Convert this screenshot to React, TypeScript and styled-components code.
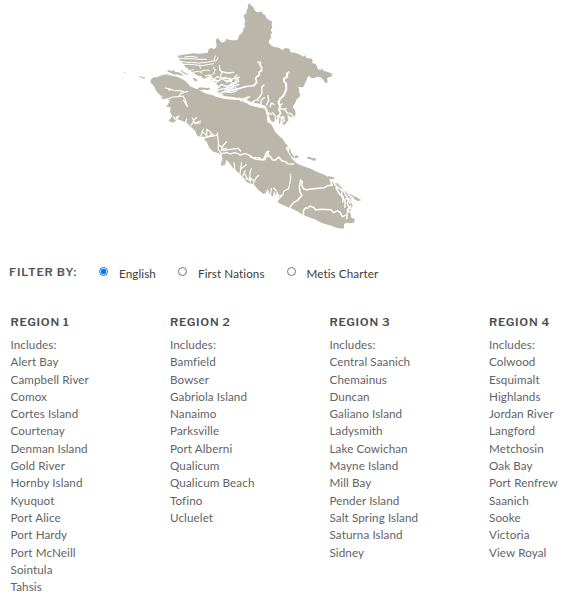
import React, { useState } from 'react'
import styled, { createGlobalStyle } from 'styled-components'

const GlobalStyle = createGlobalStyle`
  * {
    box-sizing: border-box;
  }
  body {
    margin: 0;
    overflow: hidden;
    background: #fff;
    font-family: Lato, 'Liberation Sans', sans-serif;
    font-size: 11.65px;
    letter-spacing: 0.1px;
    color: #626366;
  }
`

const Page = styled.main`
  width: 576px;
  height: 600px;
  overflow: hidden;
`

const MapSvg = styled.svg`
  display: block;
  width: 576px;
  height: 240px;
`

const Land = styled.path`
  fill: #bab7aa;
`

const Water = styled.path<{ $width: number }>`
  fill: none;
  stroke: #fff;
  stroke-width: ${(props) => props.$width};
  stroke-linejoin: round;
  stroke-linecap: round;
`

const Filters = styled.div`
  display: flex;
  height: 74px;
  padding: 24px 0 0 9px;
`

const FilterTitle = styled.h2`
  width: 90px;
  margin: 0;
  font-family: 'Libre Franklin', Roboto, sans-serif;
  font-size: 11.5px;
  font-weight: 600;
  line-height: 17px;
  letter-spacing: 0.75px;
  color: #58595b;
`

const Option = styled.label<{ $width: number }>`
  display: flex;
  width: ${(props) => props.$width}px;
  line-height: 20px;
  color: #3c3c3c;
`

const Radio = styled.input`
  width: 9px;
  height: 9px;
  margin: 3px 11px 0 0;
`

const Regions = styled.div`
  display: grid;
  grid-template-columns: repeat(4, 159.5px);
  padding-left: 10.5px;
`

const RegionTitle = styled.h3`
  margin: 0 0 5px;
  font-family: 'Libre Franklin', Roboto, sans-serif;
  font-size: 11.5px;
  font-weight: 600;
  line-height: 17px;
  letter-spacing: 0.75px;
  color: #4c4d4f;
`

const Places = styled.ul`
  margin: 0;
  padding: 0;
  list-style: none;
  line-height: 17.3px;
`

const filters = [
  { label: 'English', width: 79 },
  { label: 'First Nations', width: 108.5 },
  { label: 'Metis Charter', width: 110 },
]

const regions = [
  [
    'Alert Bay',
    'Campbell River',
    'Comox',
    'Cortes Island',
    'Courtenay',
    'Denman Island',
    'Gold River',
    'Hornby Island',
    'Kyuquot',
    'Port Alice',
    'Port Hardy',
    'Port McNeill',
    'Sointula',
    'Tahsis',
  ],
  [
    'Bamfield',
    'Bowser',
    'Gabriola Island',
    'Nanaimo',
    'Parksville',
    'Port Alberni',
    'Qualicum',
    'Qualicum Beach',
    'Tofino',
    'Ucluelet',
  ],
  [
    'Central Saanich',
    'Chemainus',
    'Duncan',
    'Galiano Island',
    'Ladysmith',
    'Lake Cowichan',
    'Mayne Island',
    'Mill Bay',
    'Pender Island',
    'Salt Spring Island',
    'Saturna Island',
    'Sidney',
  ],
  [
    'Colwood',
    'Esquimalt',
    'Highlands',
    'Jordan River',
    'Langford',
    'Metchosin',
    'Oak Bay',
    'Port Renfrew',
    'Saanich',
    'Sooke',
    'Victoria',
    'View Royal',
  ],
]

const RegionMap = () => (
  <MapSvg viewBox="0 0 1728 720" role="img" aria-label="Regions">
    {/* mainland */}
    <Land d="M532 167L565 162 580 160 600 161 623 158 626 148 635 143 640 148 648 143 650 135 647 120 653 114 660 122 666 128 675 124 680 116 688 120 700 121 712 120 718 106 728 96 730 88 736 78 732 73 736 65 733 55 731 45 740 40 739 33 743 25 745 12 750 10 753 17 760 20 765 32 770 37 782 36 786 33 788 41 795 45 800 55 810 62 816 63 815 75 817 83 812 88 816 100 811 105 814 112 808 120 806 128 815 137 823 141 837 143 847 150 856 144 868 146 872 157 887 159 903 165 908 170 915 166 919 174 936 176 938 182 936 188 948 193 954 208 962 210 966 204 970 212 990 218 997 222 994 230 985 232 981 236 983 243 981 249 976 248 970 240 962 232 952 230 943 234 934 235 928 227 922 232 920 240 915 250 911 260 905 262 894 260 898 268 896 275 901 282 899 290 890 298 886 308 878 320 885 330 887 340 884 351 876 355 868 350 865 362 858 368 857 377 848 372 842 380 836 368 838 355 828 358 824 368 812 362 806 345 800 328 780 314 750 309 730 302 705 294 670 290 652 282 648 272 656 262 648 250 635 240 625 230 612 236 600 230 585 222 570 212 558 205 552 195 545 186 535 174z" />
    {/* Vancouver Island */}
    <Land d="M452 240L460 232 470 232 485 226 500 223 515 227 530 230 542 235 555 242 565 252 570 259 592 268 615 280 635 285 650 291 675 297 700 299 720 300 735 304 748 314 770 321 795 326 800 342 802 362 812 370 818 380 825 395 838 408 848 418 856 430 864 438 857 445 865 458 875 475 888 488 900 495 920 502 936 508 950 515 975 525 990 538 1005 548 1018 562 1035 575 1053 602 1050 614 1052 632 1053 652 1060 657 1058 668 1048 670 1040 668 1032 672 1032 684 1026 686 1012 684 990 676 975 672 960 667 945 658 930 653 910 645 895 636 880 628 855 618 835 608 832 598 838 590 830 580 818 590 808 580 802 566 798 578 790 582 775 570 760 552 742 548 732 535 720 522 700 505 685 485 678 480 675 495 663 497 665 465 655 460 640 455 628 443 620 425 612 418 620 410 605 410 592 408 585 392 572 380 560 368 545 362 532 358 520 368 505 363 517 348 510 335 512 322 498 320 502 316 510 303 500 297 488 298 480 285 468 272 462 258 452 248z" />
    {/* small islands */}
    <Land d="M500 213l8-3 6 3 8-2 4 5 10 1 10 5 4 5-9-1-10-3-8 1-9-4zM416 230l6-1 5 2 7 1 2 3-6 1-4-3-8-1zM372 217l4 0 0 3-3 0zM595 263l12-1 6 2 14-1 5 4-8 3-14-1-8 2-10-2zM543 208l7 7 12 6 4 5-10-3-12-8zM578 234l8 1 6 6-3 4-8-5zM885 467l8-1 3 5-6 4-8-2zM922 471l8-1 7 5 8-1 4 7-9 1-8-4-9-1zM866 445l4 2 4 12 8 10 0 6-9-7-5-10zM982 528l14 2 8 4-3 4-8-1-10-3zM1006 542l10 8 8 10 11 8 12 9 16 10 21 14-12 2-14-8-16-6-14-11-14-14zM1030 580l14 8 10 8 0 8-12-5-8-8zM1042 604l12 4 4 10-5 6-7-8zM1052 658l12-3-1 12-8 3z" />

    {/* islets off the west coast */}
    <Water
      $width={3}
      d="M484 287l3 3M526 364l-3 4M599 418l4 3M675 500l4 2M724 534l4 4M732 548l6 3M804 590l8 6M812 600l6 4"
    />
    <Water
      $width={5}
      d="M774 187L781 187 780 196 785 202 784 213 777 217 778 225 770 230 767 236 770 246 763 256 752 258 735 260 720 265 704 268 690 272 672 275"
    />
    <Water
      $width={6}
      d="M866 217L860 222 862 230 852 236 852 244 858 250 859 266 855 278 850 288 840 296 836 308 840 318 838 332"
    />
    <Water
      $width={4}
      d="M792 255L785 262 786 278 780 290 772 298M652 285L670 290 700 293 712 296 735 304 752 314 775 320 796 322 802 334 804 352 808 362 818 369 824 384 830 394"
    />
    <Water
      $width={5}
      d="M715 295L735 300 751 308 778 314 795 320M838 330L842 340 836 348 832 362 836 374M846 375L844 360 850 350"
    />
    <g transform="translate(675 225)">
      <Water
        $width={4}
        d="M48 78l10-8 16-4M60 82l8-16M82 82l8-6 10 0M108 88l0-12 10-8M125 90l6-14-2-14M135 96l4-12 8 4M140 118l-14-6-4-12M128 140l14 6 14-8M142 112l10 12-2 14M160 80l4 12 8-6M162 98l14 6 8-4M158 122l10 6 8-4 2 14M180 105l8 10 8 0 10 10-10 4-8-8M190 128l6 14-12 4-4 10M178 138l-12 6 0 12"
      />
      <Water
        $width={3.5}
        d="M0 10l16 0M5 22l12-5 6 8 18-6-4-10-14 2M16 20l20-20M20 26l12 12M0 42l24-8 18-6"
      />
    </g>
    <g transform="translate(510 135)">
      <Water
        $width={3}
        d="M26 39l14 2 20 0 30 2 20 0M28 48l22 4 14 0 20 2 28-2 14-4 12 0 6-10M36 58l20 0 16 1 24 3 34-6M50 68l6 10 14-4M44 36l18-2 20 3M68 82l18-3 10 5M92 79l16-4 10 2M106 92l16 0 12-8M130 67l6 8-4 8M88 62l4 8M82 94l14 2M136 33l-4 14"
      />
      <Water
        $width={4}
        d="M148 62l2 14 6 4-4 12M155 80l18 4 18-2M115 97l16 6 12-8 10 4 14-2M142 110l14-10 12 8 20-6M140 108l-6 14 12 6 8-10 14 6 20-4M130 130l14 6 18-6 12 4 16-6M170 128l12-10 16-4 0-14M198 102l10-6M150 145l14-6 20 4 16-6"
      />
      <Water $width={5} d="M118 90l10 12 8 24 2 16 20 8M130 104l14 4M142 122l-2 18" />
    </g>
    {/* inlets of the north west coast */}
    <g transform="translate(330 0)">
      <Water
        $width={3.5}
        d="M166 264l14 3 10 4 20 1 15 5 8-3M162 299l15-3 10-5 18-1 14-2 8 14 5 18M207 288l6-8 14-4M175 268l5 4M190 350l6 8M202 348l-4 8"
      />
    </g>
    <g transform="translate(420 300)">
      <Water
        $width={3.5}
        d="M130 0l5 8 6 10M110 58l8-10M136 68l4-10M154 76l8-16 8-8M157 54l8 17 16-2M164 70l18-7M182 108l8-20M200 110l0-22 12 8 3 12M190 98l14 12 16-8M192 114l16-4 22-4M232 98l3 30 0 20 8 12 3 22M244 152l4-14 12-13M238 136l12 8M248 150l12-6M282 188l3 24M300 222l3-24 2-10M303 206l16-12M308 228l8-16M330 246l0-30 4-10M325 240l-12-20M340 250l8-16 8-8M342 242l-14-10M318 236l16 4"
      />
      <Water
        $width={4}
        d="M246 160l15-2 10 4 12-4 12 3 5 4 16-4 14 5 8 7 18 0 11 6 8 0 4-12 8 3-4-12 4-5M250 152l20-4 24-3 8 8"
      />
    </g>
    {/* region borders */}
    <g transform="translate(750 300)">
      <Water
        $width={4.5}
        d="M0 170l18 8 22 1 5-12 6-12 4 10 8 7 4 8 10 0 9-9 10 12 12 2 5 6 18 1M120 322l10-14 12-6 14-17-6-8-2-17 4-20 5 5-2 10 5 11 10 3 15-2 20-2 18-2 10-6 14-2-5-10M160 345l1-14 5-7 8 0 6-6 12 5 5 6 20-1 26 1 8 9 12-6 8 6 6 12 10-4"
      />
      <Water
        $width={3.5}
        d="M121 222l1 14-2 10-4 20-14 7-4 12-14 3M85 284l-8-14-6-6M70 290l4-14M62 282l2-16M95 288l-12 12"
      />
      <Water
        $width={4.5}
        d="M240 240l10 4 6 12 12 10 14 8 6 12 8 12-4 12 6 14-6 14-2 18M250 240l16 10 14 16 16 10 20 12M258 264l12 20 10 6-2 16M278 270l12 2 8 14 12 8M288 296l12 2 0 12M302 318l-10 12 10 8M275 276l0 12 10 14 0 20"
      />
    </g>
  </MapSvg>
)

const App = () => {
  const [selected, setSelected] = useState('English')

  return (
    <Page>
      <GlobalStyle />
      <RegionMap />
      <Filters>
        <FilterTitle>FILTER BY:</FilterTitle>
        {filters.map(({ label, width }) => (
          <Option key={label} $width={width}>
            <Radio
              type="radio"
              name="language"
              checked={selected === label}
              onChange={() => setSelected(label)}
            />
            {label}
          </Option>
        ))}
      </Filters>
      <Regions>
        {regions.map((places, index) => (
          <section key={places[0]}>
            <RegionTitle>REGION {index + 1}</RegionTitle>
            <Places>
              <li>Includes:</li>
              {places.map((place) => (
                <li key={place}>{place}</li>
              ))}
            </Places>
          </section>
        ))}
      </Regions>
    </Page>
  )
}

export default App
